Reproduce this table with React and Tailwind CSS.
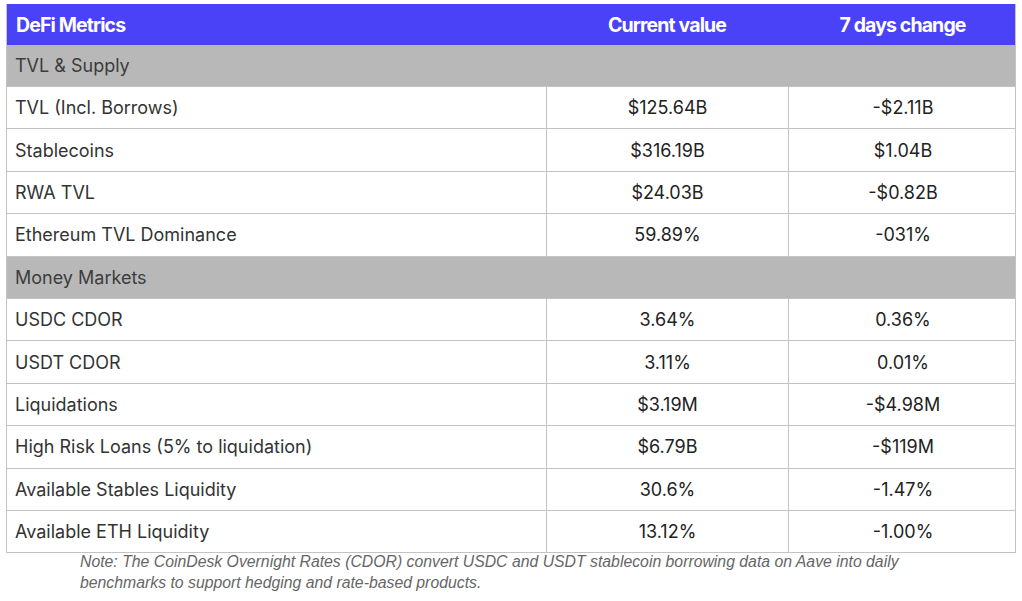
import React from 'react';

const sections = [
  {
    title: 'TVL & Supply',
    rows: [
      ['TVL (Incl. Borrows)', '$125.64B', '-$2.11B'],
      ['Stablecoins', '$316.19B', '$1.04B'],
      ['RWA TVL', '$24.03B', '-$0.82B'],
      ['Ethereum TVL Dominance', '59.89%', '-031%'],
    ],
  },
  {
    title: 'Money Markets',
    rows: [
      ['USDC CDOR', '3.64%', '0.36%'],
      ['USDT CDOR', '3.11%', '0.01%'],
      ['Liquidations', '$3.19M', '-$4.98M'],
      ['High Risk Loans (5% to liquidation)', '$6.79B', '-$119M'],
      ['Available Stables Liquidity', '30.6%', '-1.47%'],
      ['Available ETH Liquidity', '13.12%', '-1.00%'],
    ],
  },
];

const cols = 'grid grid-cols-[539px_242px_229px]';

const App = () => {
  return (
    <div className="w-[1022px] h-[601px] bg-white pt-[4px] pl-[6px]" style={{ fontFamily: 'Inter, "Noto Sans", sans-serif' }}>
      <div className="w-[1010px] border-l border-r border-b border-[#c3c3c3]">
        <div className={`${cols} h-[41px] pt-[3px] bg-[#4a42f7] text-white text-[19.5px] font-bold tracking-[-0.045em]`}>
          <div className="flex items-center pl-[9px]">DeFi Metrics</div>
          <div className="flex items-center justify-center">Current value</div>
          <div className="flex items-center justify-center">7 days change</div>
        </div>
        {sections.map((s, i) => (
          <div key={s.title}>
            <div
              className={`${i === 0 ? 'h-[41px]' : 'h-[42.5px] border-t border-[#c3c3c3]'} bg-[#b8b8b8] flex items-center pl-[8px] text-[18px] text-[#3d3d3d]`}
            >
              {s.title}
            </div>
            {s.rows.map((r) => (
              <div key={r[0]} className={`${cols} h-[42.4px] border-t border-[#c3c3c3] text-[18px] text-[#222]`}>
                <div className="flex items-center pl-[8px] text-[#333]">{r[0]}</div>
                <div className="flex items-center justify-center border-l border-[#c3c3c3]">{r[1]}</div>
                <div className="flex items-center justify-center border-l border-[#c3c3c3]">{r[2]}</div>
              </div>
            ))}
          </div>
        ))}
      </div>
      <p
        className="pl-[74px] -mt-[2px] text-[15.8px] leading-[21px] italic text-[#666]"
        style={{ fontFamily: '"Liberation Sans", Arial, sans-serif' }}
      >
        Note: The CoinDesk Overnight Rates (CDOR) convert USDC and USDT stablecoin borrowing data on Aave into daily
        <br />
        benchmarks to support hedging and rate-based products.
      </p>
    </div>
  );
};

export default App;
